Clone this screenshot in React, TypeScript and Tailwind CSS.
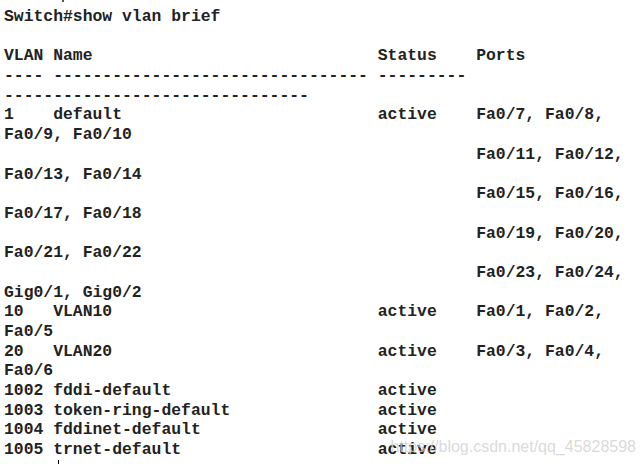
import React from "react";

const lines: string[] = [
  "Switch#show vlan brief",
  "",
  "VLAN Name                             Status    Ports",
  "---- -------------------------------- ---------",
  "-------------------------------",
  "1    default                          active    Fa0/7, Fa0/8,",
  "Fa0/9, Fa0/10",
  "                                                Fa0/11, Fa0/12,",
  "Fa0/13, Fa0/14",
  "                                                Fa0/15, Fa0/16,",
  "Fa0/17, Fa0/18",
  "                                                Fa0/19, Fa0/20,",
  "Fa0/21, Fa0/22",
  "                                                Fa0/23, Fa0/24,",
  "Gig0/1, Gig0/2",
  "10   VLAN10                           active    Fa0/1, Fa0/2,",
  "Fa0/5",
  "20   VLAN20                           active    Fa0/3, Fa0/4,",
  "Fa0/6",
  "1002 fddi-default                     active",
  "1003 token-ring-default               active",
  "1004 fddinet-default                  active",
  "1005 trnet-default                    active",
];

export default function App() {
  return (
    <main className="relative w-[644px] h-[464px] overflow-hidden bg-white">
      {/* leftover pixel of the previous line */}
      <div className="absolute left-[62px] top-0 w-[2px] h-[2px] bg-[#555]" />

      <pre className="pt-[7px] pl-[4px] font-['Liberation_Mono','Courier_New',monospace] text-[16.4px] leading-[19.7px] font-bold text-[#222]">
        {lines.map((l, i) => (
          <div key={i} className="h-[19.7px] whitespace-pre">
            {l || " "}
          </div>
        ))}
        <div className="h-[10px] pl-[54px] pt-[0px]">
          <div className="w-[1px] h-[8px] bg-black" />
        </div>
      </pre>

      {/* watermark */}
      <div className="absolute right-[8px] top-[435px] font-['Liberation_Sans',Arial,sans-serif] text-[16px] text-[#d0d0d0]/80 whitespace-nowrap">
        https://blog.csdn.net/qq_45828598
      </div>
    </main>
  );
}
